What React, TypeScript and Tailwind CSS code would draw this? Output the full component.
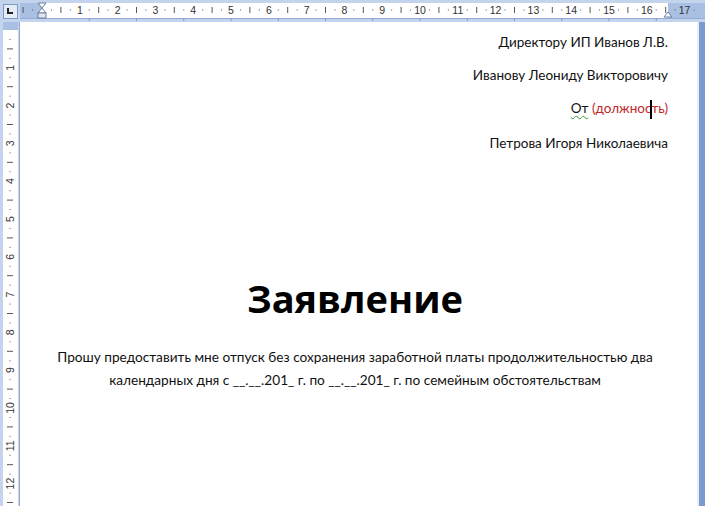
const CM = 37.8

function HRuler() {
  const zero = 22 // offset of 0 inside the svg (svg starts at x=20)
  const ticks: React.ReactNode[] = []
  for (let q = -3; q <= 72; q++) {
    const x = zero + (q * CM) / 4
    if (x < 2 || x > 683) continue
    if (q % 4 === 0) {
      const n = Math.abs(q / 4)
      if (n === 0) continue
      ticks.push(
        <text key={q} x={x} y={13.5} textAnchor="middle" fontSize="10.5" fill="#333" fontFamily="Liberation Sans, sans-serif">
          {n}
        </text>
      )
    } else if (q % 2 === 0) {
      ticks.push(<line key={q} x1={x} x2={x} y1={7} y2={13} stroke="#555" strokeWidth="1" />)
    } else {
      ticks.push(<rect key={q} x={x - 0.5} y={9.5} width={1} height={1} fill="#555" />)
    }
  }
  const tabs = [1.25, 2.5, 3.75, 5, 6.25, 7.5, 8.75, 10, 11.25, 12.5, 13.75, 15, 16.25].map((c) => zero + c * CM)
  return (
    <svg width="685" height="22" className="block">
      <rect x="0" y="0" width="685" height="22" fill="#c3d4ec" />
      <rect x="0" y="3" width="685" height="15" fill="#a9c0e2" />
      <rect x={zero} y="3" width={626} height="15" fill="#ffffff" />
      <line x1="0" x2="685" y1="18.5" y2="18.5" stroke="#92acd6" />
      {tabs.map((x, i) => (
        <line key={i} x1={x} x2={x} y1={18} y2={21} stroke="#7f9cc8" />
      ))}
      {ticks}
      {/* first line / hanging indent hourglass */}
      <path d={`M${zero - 4} 3 L${zero + 4} 3 L${zero} 8 Z`} fill="#fff" stroke="#6a7f9e" />
      <path d={`M${zero - 4} 13 L${zero + 4} 13 L${zero} 8 Z`} fill="#fff" stroke="#6a7f9e" />
      <rect x={zero - 4} y="13" width="8" height="5" fill="#dfe6f0" stroke="#6a7f9e" />
      {/* right indent */}
      <path d={`M${zero + 626 - 4} 17 L${zero + 626 + 4} 17 L${zero + 626} 12 Z`} fill="#fff" stroke="#6a7f9e" />
    </svg>
  )
}

function VRuler() {
  const zero = 8
  const ticks: React.ReactNode[] = []
  for (let q = 1; q <= 52; q++) {
    const y = zero + (q * CM) / 4
    if (y > 486) continue
    if (q % 4 === 0) {
      ticks.push(
        <text
          key={q}
          x={10}
          y={y}
          textAnchor="middle"
          dominantBaseline="central"
          fontSize="10.5"
          fill="#333"
          fontFamily="Liberation Sans, sans-serif"
          transform={`rotate(-90 10 ${y})`}
        >
          {q / 4}
        </text>
      )
    } else if (q % 2 === 0) {
      ticks.push(<line key={q} x1={7} x2={13} y1={y} y2={y} stroke="#555" />)
    } else {
      ticks.push(<rect key={q} x={9.5} y={y - 0.5} width={1} height={1} fill="#555" />)
    }
  }
  return (
    <svg width="20" height="484" className="block shrink-0">
      <rect x="0" y="0" width="20" height="484" fill="#c3d4ec" />
      <rect x="3" y="0" width="15" height="484" fill="#ffffff" />
      <rect x="3" y="0" width="15" height={zero} fill="#a9c0e2" />
      <line x1="19.5" x2="19.5" y1="0" y2="484" stroke="#92acd6" />
      {ticks}
    </svg>
  )
}

export default function App() {
  return (
    <div className="w-[705px] h-[506px] overflow-hidden bg-[#c3d4ec] flex flex-col" style={{ fontFamily: 'Lato, "Open Sans", sans-serif' }}>
      <div className="flex h-[22px] shrink-0">
        <div className="w-[20px] h-[22px] flex items-center justify-center bg-[#c3d4ec]">
          <div className="w-[15px] h-[15px] border border-[#7c98c4] bg-[#e4ecf7] flex items-center justify-center">
            <div className="w-[6px] h-[6px] border-l-2 border-b-2 border-[#222]" />
          </div>
        </div>
        <HRuler />
      </div>
      <div className="flex flex-1 min-h-0">
        <VRuler />
        <div className="flex-1 bg-white pl-[22px] pr-[29px] pt-[11px] text-[#111]">
          <div className="flex flex-col items-end gap-[15px] text-[13.5px] leading-[18px]">
            <p>Директору ИП Иванов Л.В.</p>
            <p>Иванову Леониду Викторовичу</p>
            <p>
              <span className="underline decoration-wavy decoration-[#3a9a3a] decoration-1 underline-offset-2">От</span>{' '}
              <span className="text-[#c0282a]">
                (должнос<span className="inline-block w-[2px] h-[19px] bg-black align-middle -mx-px" />ть)
              </span>
            </p>
            <p>Петрова Игоря Николаевича</p>
          </div>
          <h1
            className="mt-[124px] text-center text-[38px] leading-[44px] font-bold text-black"
            style={{ fontFamily: '"Open Sans", sans-serif' }}
          >
            Заявление
          </h1>
          <p className="mt-[26px] text-center text-[13.65px] leading-[23px]">
            Прошу предоставить мне отпуск без сохранения заработной платы продолжительностью два календарных дня с __.__.201_ г. по __.__.201_ г. по семейным обстоятельствам
          </p>
        </div>
        <div className="w-[8px] shrink-0 flex">
          <div className="w-[2px] bg-[#e8eef8]" />
          <div className="flex-1 bg-[#7b9bd0]" />
        </div>
      </div>
    </div>
  )
}
